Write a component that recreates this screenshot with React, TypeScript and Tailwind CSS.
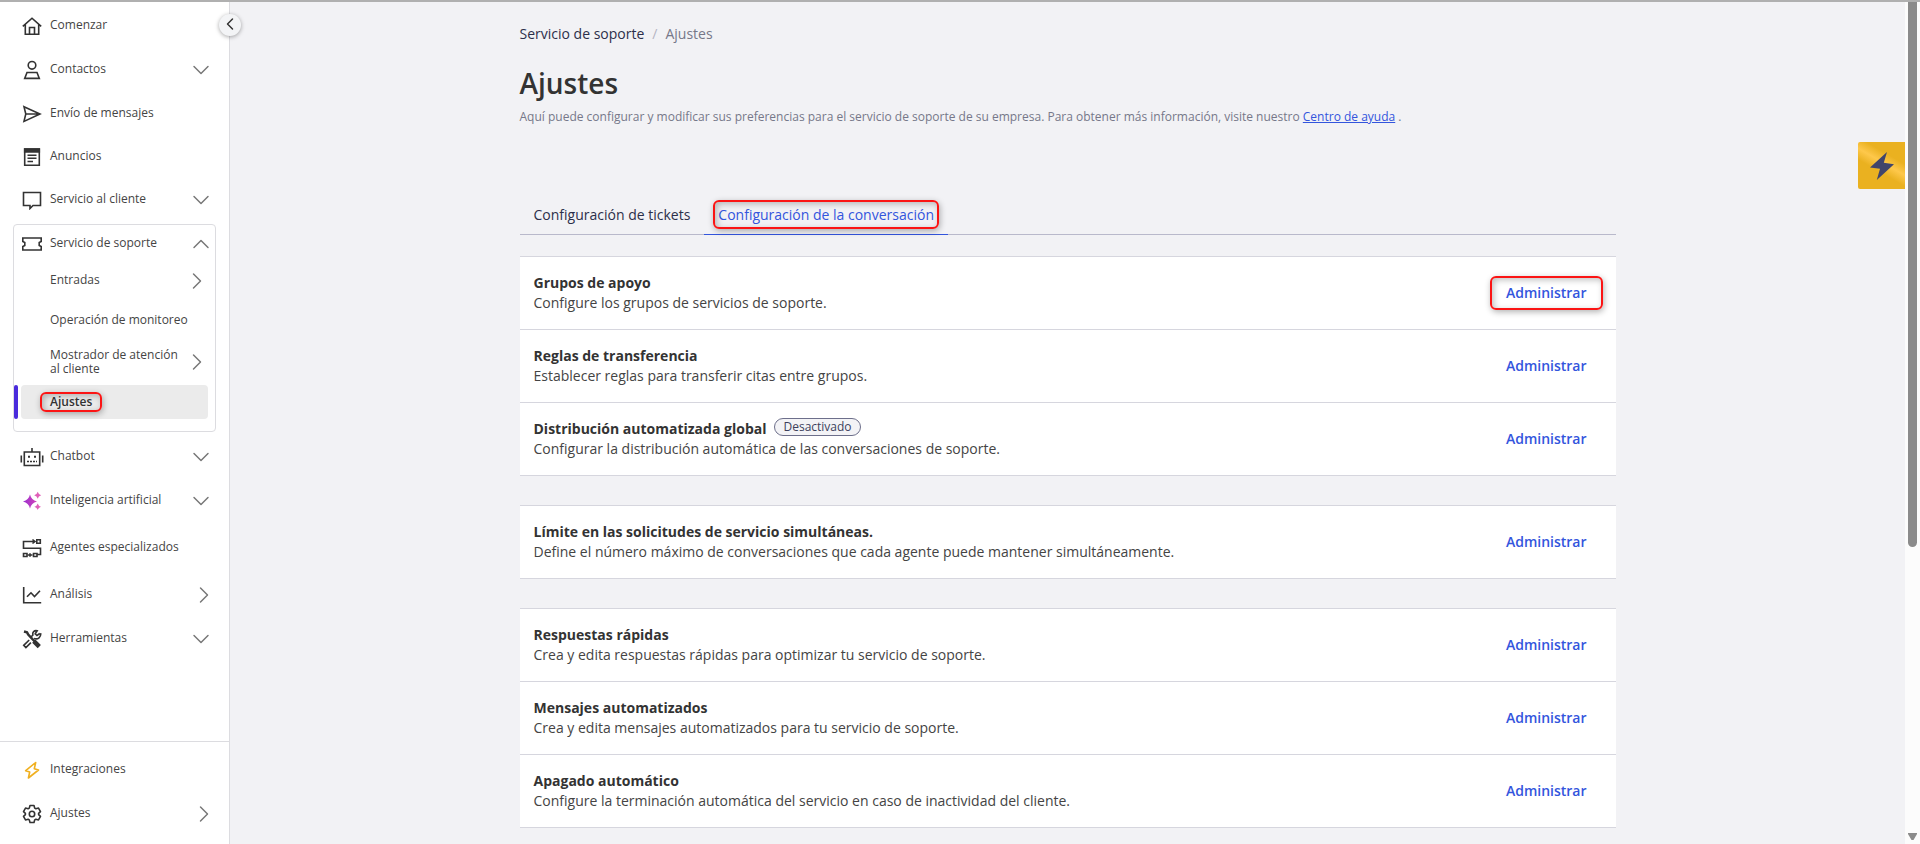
import { useState, type ReactNode } from 'react'
import { ChevronDown, ChevronLeft, ChevronRight, ChevronUp } from 'lucide-react'

type Arrow = 'down' | 'right'

interface NavItem {
  label: string
  icon: ReactNode
  arrow?: Arrow
  height?: string
}

interface Setting {
  title: string
  description: string
  badge?: string
  highlighted?: boolean
}

function Icon({ children }: { children: ReactNode }) {
  return (
    <svg viewBox="0 0 20 20" fill="none" stroke="#333" strokeWidth="1.6" className="size-5 shrink-0" aria-hidden="true">
      {children}
    </svg>
  )
}

const icons = {
  home: (
    <Icon>
      <path d="M.8 10.300 10 2.200l9.200 8.100M3.300 8.500v9.700h13.400V8.500M7.500 18v-6.500h5V18" />
    </Icon>
  ),
  contact: (
    <Icon>
      <circle cx="10" cy="5.300" r="3.800" />
      <path d="M5 12.500h10l2.300 5.900H2.700z" />
    </Icon>
  ),
  send: (
    <Icon>
      <path d="M2 2.700 18 10 2 17.400l1.800-7.400zM3.800 10H18" />
    </Icon>
  ),
  news: (
    <Icon>
      <path d="M2.700 2h14.600v16.200H2.700z" />
      <path d="M2.700 2h14.600v3H2.700z" fill="#333" />
      <path d="M5.500 8.300h9M5.500 11.300h9M5.500 14.500h5.500" />
    </Icon>
  ),
  chat: (
    <Icon>
      <path d="M1.500 2.500h17v13H11l-3 3v-3H1.500z" />
    </Icon>
  ),
  ticket: (
    <Icon>
      <path d="M.8 4h18.400v3.500l-2 1v3l2 1V16H.8v-3.500l2-1v-3l-2-1z" />
    </Icon>
  ),
  bot: (
    <svg viewBox="0 0 24 20" fill="none" stroke="#333" strokeWidth="1.600" className="-mx-[2px] h-5 w-6 shrink-0" aria-hidden="true">
      <path d="M12 1v4M4.300 5h15.400v13.500H4.300z" />
      <path d="M1.300 8.500v7M22.700 8.500v7" />
      <path d="M8 9.800h2M14 9.800h2" strokeWidth="2" />
      <path d="M7 14.500h10" strokeWidth="1.300" strokeDasharray="2 1" />
    </svg>
  ),
  sparkles: (
    <svg viewBox="0 0 20 20" className="size-5 shrink-0" aria-hidden="true">
      <defs>
        <linearGradient id="spark" x1="0" y1="0" x2="1" y2="0">
          <stop offset="0" stopColor="#9b2fd0" />
          <stop offset="1" stopColor="#d045b8" />
        </linearGradient>
      </defs>
      <path d="M8 3.500q1.300 5.600 7 7-5.700 1.400-7 7-1.300-5.600-7-7 5.700-1.400 7-7z" fill="url(#spark)" />
      <path d="M15.700.8q.7 2.700 3.500 3.500-2.800.8-3.500 3.500-.7-2.700-3.500-3.500 2.800-.8 3.500-3.500zM15.700 12.500q.7 2.500 3.300 3.200-2.600.8-3.300 3.300-.7-2.500-3.300-3.300 2.600-.7 3.300-3.200z" fill="#e060b8" />
    </svg>
  ),
  flow: (
    <Icon>
      <path d="M14.800 1.800h3.500v3.500h-3.500zM1.500 15.500H5v3H1.500zM11.500 15.500h3.500v3h-3.500z" />
      <path d="M12.500 3.500h-11v6.700h17v6.300H15M10.500 1.500l2.500 2-2.500 2M5.500 17h5M8 15.200v3.600" />
    </Icon>
  ),
  analytics: (
    <Icon>
      <path d="M1.700 2v15.800h17.500" />
      <path d="m5 11.800 4-4 3.500 3.700L18 5.800" />
    </Icon>
  ),
  tools: (
    <Icon>
      <path d="m2 2.500 3 .8 1.200 2.200 6.500 7" strokeWidth="2.500" />
      <path d="m11.800 12.200 5.500 5.500" strokeWidth="4.500" />
      <path d="M17.800 4.500 15 6.500l-1.800-1.700 2-3c-3-.8-5 1.500-4.300 4.200L8.300 8.700M7.200 11l-5.500 5.300 2.200 2.300 5-5M12 9.500c4 1.300 7.300-1.500 6.600-5.300" />
    </Icon>
  ),
  bolt: (
    <svg viewBox="0 0 20 20" fill="none" stroke="#f0b020" strokeWidth="1.600" strokeLinejoin="round" className="size-5 shrink-0" aria-hidden="true">
      <path d="M13.700 2.500 3.700 10.700l4 1.300-1.300 6L16.500 10l-4.200-1.300z" />
    </svg>
  ),
  gear: (
    <Icon>
      <circle cx="10" cy="10" r="2.700" />
      <path d="M8 1.500h4l.7 2.600 1.200.7 2.600-.7 2 3.500-1.900 1.800v1.200l1.900 1.800-2 3.500-2.600-.7-1.200.7-.7 2.600H8l-.7-2.600-1.200-.7-2.600.7-2-3.500 1.900-1.800V9.400L1.500 7.600l2-3.500 2.600.7 1.200-.7z" strokeLinejoin="round" />
    </Icon>
  ),
}

const topItems: NavItem[] = [
  { label: 'Comenzar', icon: icons.home },
  { label: 'Contactos', icon: icons.contact, arrow: 'down' },
  { label: 'Envío de mensajes', icon: icons.send, height: 'h-[43px]' },
  { label: 'Anuncios', icon: icons.news, height: 'h-[43px]' },
  { label: 'Servicio al cliente', icon: icons.chat, arrow: 'down', height: 'h-[43px]' },
]

const lowerItems: NavItem[] = [
  { label: 'Chatbot', icon: icons.bot, arrow: 'down' },
  { label: 'Inteligencia artificial', icon: icons.sparkles, arrow: 'down' },
  { label: 'Agentes especializados', icon: icons.flow, height: 'h-[50px]' },
  { label: 'Análisis', icon: icons.analytics, arrow: 'right' },
  { label: 'Herramientas', icon: icons.tools, arrow: 'down' },
]

const footerItems: NavItem[] = [
  { label: 'Integraciones', icon: icons.bolt },
  { label: 'Ajustes', icon: icons.gear, arrow: 'right' },
]

const groups: Setting[][] = [
  [
    { title: 'Grupos de apoyo', description: 'Configure los grupos de servicios de soporte.', highlighted: true },
    { title: 'Reglas de transferencia', description: 'Establecer reglas para transferir citas entre grupos.' },
    {
      title: 'Distribución automatizada global',
      description: 'Configurar la distribución automática de las conversaciones de soporte.',
      badge: 'Desactivado',
    },
  ],
  [
    {
      title: 'Límite en las solicitudes de servicio simultáneas.',
      description: 'Define el número máximo de conversaciones que cada agente puede mantener simultáneamente.',
    },
  ],
  [
    { title: 'Respuestas rápidas', description: 'Crea y edita respuestas rápidas para optimizar tu servicio de soporte.' },
    { title: 'Mensajes automatizados', description: 'Crea y edita mensajes automatizados para tu servicio de soporte.' },
    { title: 'Apagado automático', description: 'Configure la terminación automática del servicio en caso de inactividad del cliente.' },
  ],
]

const chevron = 'size-7 shrink-0 text-[#777]'

// Red frame drawn round the element it sits in
function Marker({ className }: { className: string }) {
  return (
    <span
      className={`pointer-events-none absolute rounded-md border-2 border-[#fb1414] shadow-[1px_2px_6px_rgba(0,0,0,0.3),inset_2px_2px_6px_rgba(0,0,0,0.25)] ${className}`}
    />
  )
}

function NavLink({ item }: { item: NavItem }) {
  return (
    <a href="#" className={`flex items-center pl-[22px] ${item.arrow === 'right' ? 'pr-[11px]' : 'pr-[14px]'} ${item.height ?? 'h-11'}`}>
      {item.icon}
      <span className="ml-2 flex-1 pb-[2px]">{item.label}</span>
      {item.arrow === 'down' && <ChevronDown className={chevron} strokeWidth={1.25} />}
      {item.arrow === 'right' && <ChevronRight className={chevron} strokeWidth={1.25} />}
    </a>
  )
}

function Sidebar() {
  return (
    <aside className="relative flex w-[230px] shrink-0 flex-col border-r border-[#dcdce0] bg-white text-xs leading-3 text-[#444]">
      <button
        type="button"
        aria-label="Contraer menú"
        className="absolute top-3 -right-3 flex size-[22px] items-center justify-center rounded-full bg-[#f3f4f6] pb-[2px] text-[#333] shadow-[0_1px_4px_rgba(0,0,0,0.35)]"
      >
        <ChevronLeft className="size-5" strokeWidth={1.75} />
      </button>
      <nav className="flex-1 pt-[2px]">
        {topItems.map(item => (
          <NavLink key={item.label} item={item} />
        ))}

        <div className="mx-[13px] my-[3px] rounded border border-[#dcdce0] pb-3">
          <a href="#" className="flex h-[37px] items-center pl-2">
            {icons.ticket}
            <span className="ml-2 flex-1 pb-[2px]">Servicio de soporte</span>
            <ChevronUp className={chevron} strokeWidth={1.25} />
          </a>
          <a href="#" className="flex h-[37px] items-center pr-1 pl-9">
            <span className="flex-1 pb-[2px]">Entradas</span>
            <ChevronRight className={chevron} strokeWidth={1.25} />
          </a>
          <a href="#" className="flex h-[42px] items-center pl-9">
            Operación de monitoreo
          </a>
          <a href="#" className="flex h-11 items-center pr-1 pb-[2px] pl-9">
            <span className="flex-1 leading-[14px] whitespace-nowrap">
              Mostrador de atención
              <br />
              al cliente
            </span>
            <ChevronRight className={chevron} strokeWidth={1.25} />
          </a>
          <a href="#" className="flex h-[34px] gap-[3px] pr-[7px] font-semibold text-[#333]">
            <span className="w-1 rounded-sm bg-[#4a2bdc]" />
            <span className="flex flex-1 items-center rounded bg-[#ebebeb] pl-[29px]">
              <span className="relative">
                Ajustes
                <Marker className="-inset-x-[10px] -inset-y-1" />
              </span>
            </span>
          </a>
        </div>

        {lowerItems.map(item => (
          <NavLink key={item.label} item={item} />
        ))}
      </nav>
      <div className="border-t border-[#dcdce0] pt-[6px] pb-2">
        {footerItems.map(item => (
          <NavLink key={item.label} item={item} />
        ))}
      </div>
    </aside>
  )
}

function SettingRow({ setting }: { setting: Setting }) {
  return (
    <li className="flex h-[73px] items-center justify-between border-b border-[#d6d6de] pr-[29px] pl-[14px]">
      <div className="leading-5">
        <h2 className="flex gap-2 font-bold text-[#333]">
          {setting.title}
          {setting.badge && (
            <span className="-mt-px h-[18px] rounded-full border border-[#6d6f8b] bg-[#f3f3f6] px-2 text-xs leading-4 font-normal text-[#3c3f5c]">
              {setting.badge}
            </span>
          )}
        </h2>
        <p className="text-[#444]">{setting.description}</p>
      </div>
      <button type="button" className="relative font-semibold text-[#3355dd]">
        Administrar
        {setting.highlighted && <Marker className="-inset-x-4 -inset-y-[7px]" />}
      </button>
    </li>
  )
}

function Scrollbar() {
  return (
    <div className="flex w-[15px] shrink-0 flex-col items-center justify-between bg-[#fcfcfc] pb-1">
      <div className="h-[65%] w-[9px] rounded-b-full bg-[#8b8b8b]" />
      <svg viewBox="0 0 9 7" className="h-[7px] w-[9px]" aria-hidden="true">
        <path d="M0 0h9v1L5.500 7h-2L0 1z" fill="#8b8b8b" />
      </svg>
    </div>
  )
}

export default function App() {
  const [tab, setTab] = useState('conversation')
  const activeTab = 'border-[#3355dd] text-[#3355dd]'
  const idleTab = 'border-transparent text-[#2c2f4a]'

  return (
    <div className="flex h-screen flex-col overflow-hidden border-t-2 border-[#b0b0b0] bg-[#f2f2f5] font-['Open_Sans',sans-serif] text-sm">
      <div className="flex min-h-0 flex-1">
        <Sidebar />

        <main className="relative min-w-0 flex-1">
          <div className="mx-auto max-w-[1096px]">
            <nav aria-label="Ruta" className="flex gap-2 pt-[22px] leading-5">
              <a href="#" className="text-[#2c2f4a]">
                Servicio de soporte
              </a>
              <span className="text-[#b5b5c3]">/</span>
              <span className="text-[#767889]">Ajustes</span>
            </nav>
            <h1 className="mt-[19px] text-[28px] leading-10 font-semibold text-[#333]">Ajustes</h1>
            <p className="mt-1 text-xs leading-5 text-[#767889]">
              Aquí puede configurar y modificar sus preferencias para el servicio de soporte de su empresa. Para obtener más
              información, visite nuestro{' '}
              <a href="#" className="text-[#3355dd] underline">
                Centro de ayuda
              </a>{' '}
              .
            </p>

            <div role="tablist" className="mt-[68px] flex border-b border-[#b9b9cb]">
              <button
                type="button"
                role="tab"
                aria-selected={tab === 'tickets'}
                onClick={() => setTab('tickets')}
                className={`-mb-px h-10 border-b px-[14px] ${tab === 'tickets' ? activeTab : idleTab}`}
              >
                Configuración de tickets
              </button>
              <button
                type="button"
                role="tab"
                aria-selected={tab === 'conversation'}
                onClick={() => setTab('conversation')}
                className={`-mb-px h-10 border-b px-[14px] ${tab === 'conversation' ? activeTab : idleTab}`}
              >
                <span className="relative">
                  Configuración de la conversación
                  <Marker className="-inset-x-[5px] -inset-y-[5px]" />
                </span>
              </button>
            </div>

            <div className="mt-[21px] flex flex-col gap-[29px]">
              {groups.map(group => (
                <ul key={group[0].title} className="border-t border-[#d6d6de] bg-white">
                  {group.map(setting => (
                    <SettingRow key={setting.title} setting={setting} />
                  ))}
                </ul>
              ))}
            </div>
          </div>

          <button
            type="button"
            aria-label="Accesos rápidos"
            className="absolute top-[140px] right-0 flex size-[47px] items-center justify-center rounded-l-xs bg-linear-[30deg,#eab120_40%,#fec84b_55%,#eab120_70%]"
          >
            <svg viewBox="0 0 24 28" className="h-7 w-6" aria-hidden="true">
              <path d="M17 0 0 15.500l10 1.300L6.800 28 24 12.200l-10.200-1.500z" fill="#41456b" />
            </svg>
          </button>
        </main>

        <Scrollbar />
      </div>
    </div>
  )
}
